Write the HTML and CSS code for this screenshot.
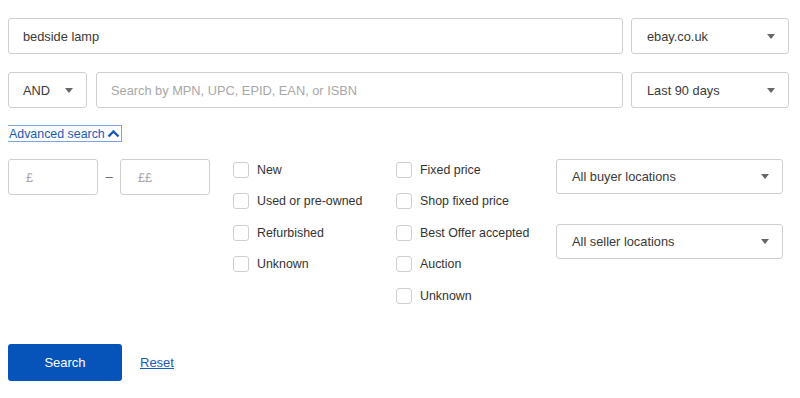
FILE: index.html
```html
<!DOCTYPE html>
<html lang="en">
<head>
    <meta charset="UTF-8">
    <meta name="viewport" content="width=device-width, initial-scale=1.0">
    <title>Advanced search</title>
    <link rel="stylesheet" href="styles.css">
</head>
<body>
    <form class="search-form">
        <div class="row row-top">
            <input type="text" class="field keyword" value="bedside lamp">
            <div class="select site">
                <span>ebay.co.uk</span>
                <span class="caret"></span>
            </div>
        </div>

        <div class="row row-second">
            <div class="select operator">
                <span>AND</span>
                <span class="caret"></span>
            </div>
            <input type="text" class="field product-id" placeholder="Search by MPN, UPC, EPID, EAN, or ISBN">
            <div class="select site">
                <span>Last 90 days</span>
                <span class="caret"></span>
            </div>
        </div>

        <div class="toggle-row">
            <a href="#" class="adv-toggle">Advanced search
                <svg class="chevron" width="13" height="9" viewBox="0 0 13 9">
                    <path d="M1.5 7.5 L6.5 2.5 L11.5 7.5" fill="none" stroke="#1a5ab8" stroke-width="2.4"/>
                </svg>
            </a>
        </div>

        <div class="advanced">
            <div class="price">
                <input type="text" class="field price-box" placeholder="£">
                <span class="dash">&ndash;</span>
                <input type="text" class="field price-box" placeholder="££">
            </div>

            <div class="options condition">
                <label class="option"><span class="box"></span>New</label>
                <label class="option"><span class="box"></span>Used or pre-owned</label>
                <label class="option"><span class="box"></span>Refurbished</label>
                <label class="option"><span class="box"></span>Unknown</label>
            </div>

            <div class="options format">
                <label class="option"><span class="box"></span>Fixed price</label>
                <label class="option"><span class="box"></span>Shop fixed price</label>
                <label class="option"><span class="box"></span>Best Offer accepted</label>
                <label class="option"><span class="box"></span>Auction</label>
                <label class="option"><span class="box"></span>Unknown</label>
            </div>

            <div class="locations">
                <div class="select location">
                    <span>All buyer locations</span>
                    <span class="caret"></span>
                </div>
                <div class="select location">
                    <span>All seller locations</span>
                    <span class="caret"></span>
                </div>
            </div>
        </div>

        <div class="actions">
            <button type="button" class="btn-search">Search</button>
            <a href="#" class="reset">Reset</a>
        </div>
    </form>
</body>
</html>
```

FILE: styles.css
```css
body {
    font-family: "Liberation Sans", Arial, sans-serif;
    margin: 8px;
    background: #fff;
    color: #333;
}

.search-form {
    width: 781px;
}

.row {
    display: flex;
    gap: 8px;
}

.row-top {
    margin-top: 10px;
}

.row-second {
    margin-top: 18px;
}

.field {
    box-sizing: border-box;
    height: 36px;
    border: 1px solid #cfcfcf;
    border-radius: 3px;
    padding: 0 14px;
    font-family: inherit;
    font-size: 12.8px;
    color: #3a3a3a;
    background: #fff;
    outline: none;
}

.field::placeholder {
    color: #a8a8a8;
}

.keyword {
    flex: 1;
}

.product-id {
    flex: 1;
    margin-left: 1px;
}

.select {
    box-sizing: border-box;
    height: 36px;
    border: 1px solid #cfcfcf;
    border-radius: 3px;
    padding: 0 13px 0 15px;
    display: flex;
    align-items: center;
    justify-content: space-between;
    font-size: 12.8px;
    color: #3a3a3a;
}

.site {
    width: 158px;
}

.operator {
    width: 79px;
    padding-left: 14px;
}

.caret {
    width: 0;
    height: 0;
    border-left: 4.5px solid transparent;
    border-right: 4.5px solid transparent;
    border-top: 5px solid #666;
}

.toggle-row {
    display: flex;
    margin-top: 18px;
    height: 15px;
}

.adv-toggle {
    display: flex;
    align-items: center;
    gap: 2px;
    height: 15px;
    padding: 0 1px;
    font-size: 12.4px;
    color: #1a5ab8;
    text-decoration: none;
    outline: 1px solid #7fa6e0;
}

.advanced {
    display: flex;
    margin-top: 18px;
}

.price {
    display: flex;
    align-items: flex-start;
    width: 225px;
}

.price-box {
    width: 90px;
    padding: 0 17px;
}

.dash {
    width: 22px;
    line-height: 36px;
    text-align: center;
    color: #666;
    font-size: 13px;
}

.options {
    display: flex;
    flex-direction: column;
    gap: 15.5px;
    padding-top: 2.5px;
}

.condition {
    width: 163px;
}

.format {
    width: 160px;
}

.option {
    display: flex;
    align-items: center;
    gap: 8px;
    height: 16px;
    font-size: 12.4px;
    color: #333;
}

.box {
    box-sizing: border-box;
    width: 16px;
    height: 16px;
    border: 1px solid #cfcfcf;
    border-radius: 3px;
}

.locations {
    display: flex;
    flex-direction: column;
    gap: 30px;
}

.location {
    width: 227px;
    height: 35px;
    padding-left: 15px;
    padding-right: 13px;
}

.actions {
    display: flex;
    align-items: center;
    gap: 18px;
    margin-top: 40px;
}

.btn-search {
    width: 114px;
    height: 37px;
    border: none;
    border-radius: 3px;
    background: #0654ba;
    color: #fff;
    font-family: inherit;
    font-size: 13px;
}

.reset {
    color: #1a5ab8;
    font-size: 13px;
}
```
